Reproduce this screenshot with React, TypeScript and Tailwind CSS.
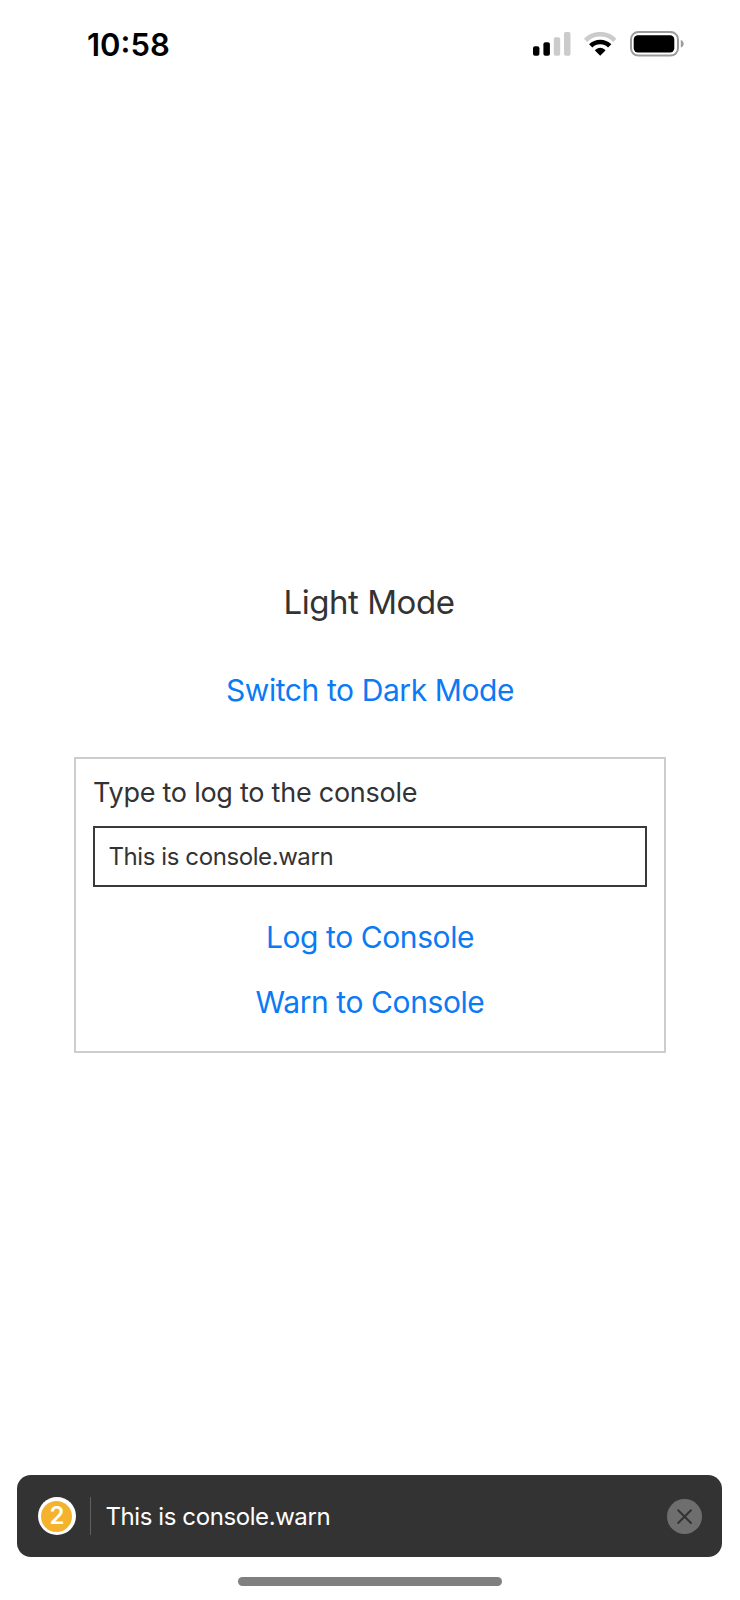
function CellularIcon() {
  return (
    <svg width="38" height="24" viewBox="0 0 38 24">
      <rect x="0" y="14.2" width="6.4" height="9.5" rx="2" fill="#000" />
      <rect x="10.4" y="10.2" width="6.5" height="13.5" rx="2" fill="#000" />
      <rect x="20.8" y="5.2" width="6.4" height="18.5" rx="1.8" fill="#cbcbcb" />
      <rect x="31" y="0.1" width="6.5" height="23.6" rx="1.8" fill="#cbcbcb" />
    </svg>
  );
}

function WifiIcon() {
  return (
    <svg width="33" height="24" viewBox="0 0 33 24">
      <path d="M1.6 8.3 A20.5 20.5 0 0 1 30.8 8.3" fill="none" stroke="#cbcbcb" strokeWidth="4.6" />
      <path d="M6.7 13.9 A13.4 13.4 0 0 1 25.7 13.9" fill="none" stroke="#000" strokeWidth="4.6" />
      <path d="M16.2 23.7 L11.2 18.8 Q10.8 18.2 11.4 17.7 Q16.2 13.9 21 17.7 Q21.6 18.2 21.2 18.8 Z" fill="#000" />
    </svg>
  );
}

function BatteryIcon() {
  return (
    <svg width="54" height="26" viewBox="0 0 54 26">
      <rect x="1" y="1" width="47" height="23.6" rx="7.4" fill="none" stroke="#9b9b9b" strokeWidth="2" />
      <rect x="3.7" y="4.2" width="40.6" height="17.2" rx="4.2" fill="#000" />
      <path d="M50.8 9 Q53.6 9.9 53.6 12.8 Q53.6 15.7 50.8 16.6 Z" fill="#9b9b9b" />
    </svg>
  );
}

function StatusBar() {
  return (
    <header className="flex h-[88px] items-center pl-[87px] pr-[56px]">
      <time className="pt-[2px] text-[31px] leading-9 font-semibold text-black">10:58</time>
      <div className="ml-auto flex items-center gap-[13px]">
        <CellularIcon />
        <WifiIcon />
        <BatteryIcon />
      </div>
    </header>
  );
}

function LinkButton({ children }: { children: string }) {
  return (
    <button type="button" className="block text-[30px] leading-9 tracking-[-0.41px] text-[#0a7af5]">
      {children}
    </button>
  );
}

function LogBox() {
  return (
    <div className="mt-[49px] flex h-[296px] w-[592px] flex-col items-center border-2 border-[#cdcdcd] px-[17px] pt-[18px]">
      <label htmlFor="message" className="w-full text-[27px] leading-8 tracking-[-0.25px] text-[#333]">
        Type to log to the console
      </label>
      <input
        id="message"
        defaultValue="This is console.warn"
        className="mt-[17px] h-[61px] w-full border-2 border-[#3a3a3a] pl-[13.5px] text-[24px] leading-7 tracking-[-0.41px] text-[#333] outline-none"
      />
      <div className="mt-[32px] flex flex-col items-center gap-[29px]">
        <LinkButton>Log to Console</LinkButton>
        <LinkButton>Warn to Console</LinkButton>
      </div>
    </div>
  );
}

function WarningToast() {
  return (
    <div className="mr-px flex h-[82px] w-[705px] items-center rounded-[14px] bg-[#333] pl-[20.5px] pr-[20.5px]">
      <div className="flex size-[38px] shrink-0 items-center justify-center rounded-full bg-white">
        <div className="flex size-[31px] items-center justify-center rounded-full bg-[#f5b22c] pl-px text-[24px] leading-none font-semibold text-white">
          2
        </div>
      </div>
      <div className="ml-[14px] h-[38px] w-px bg-[#5f5f5f]" />
      <p className="ml-[15px] pt-[2px] text-[24px] leading-7 tracking-[-0.41px] text-white">This is console.warn</p>
      <button type="button" aria-label="Dismiss" className="ml-auto">
        <svg width="35" height="35" viewBox="0 0 35 35">
          <circle cx="17.5" cy="17.5" r="17.5" fill="#6e6e6e" />
          <path d="M11.2 11.2 L24 24 M24 11.2 L11.2 24" fill="none" stroke="#333" strokeWidth="2" strokeLinecap="round" />
        </svg>
      </button>
    </div>
  );
}

export default function App() {
  return (
    <div className="flex h-[1600px] w-[740px] flex-col bg-white font-['Inter',sans-serif]">
      <StatusBar />
      <main className="flex flex-1 flex-col items-center pt-[494px]">
        <h1 className="pr-[2px] text-[33px] leading-10 tracking-[-0.46px] text-[#333]">Light Mode</h1>
        <div className="mt-[50px]">
          <LinkButton>Switch to Dark Mode</LinkButton>
        </div>
        <LogBox />
      </main>
      <footer className="flex flex-col items-center pb-[14px]">
        <WarningToast />
        <div className="mt-[20px] h-[9px] w-[264px] rounded-full bg-[#7f7f7f]" />
      </footer>
    </div>
  );
}
